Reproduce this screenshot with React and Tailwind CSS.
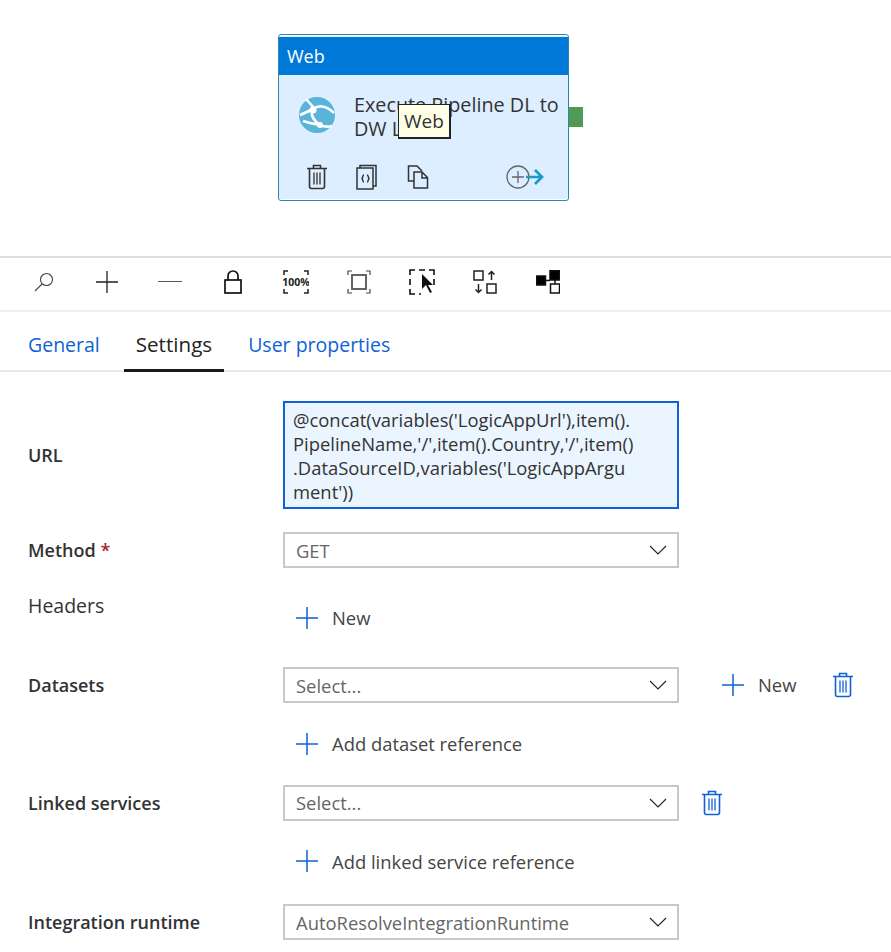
function Trash({ className = 'w-[22px] h-[26px] text-[#333]' }) {
  return (
    <svg viewBox="0 0 22 26" className={className} fill="none" stroke="currentColor" strokeWidth="1.6">
      <path d="M1 4.500h20M7.500 4.500V1.500h7v3M3.500 4.500v18a2 2 0 0 0 2 2h11a2 2 0 0 0 2-2v-18" />
      <path d="M8 8.500v12M11 8.500v12M14 8.500v12" strokeWidth="1.300" />
    </svg>
  )
}

function Plus({ className = 'w-[24px] h-[24px] text-[#0f62d6]' }) {
  return (
    <svg viewBox="0 0 24 24" className={className} fill="none" stroke="currentColor" strokeWidth="1.500">
      <path d="M12 1v22M1 12h22" />
    </svg>
  )
}

function Chevron() {
  return (
    <svg viewBox="0 0 18 10" className="w-[18px] h-[10px] text-[#222]" fill="none" stroke="currentColor" strokeWidth="1.100">
      <path d="M1 1l8 8 8-8" />
    </svg>
  )
}

function Select({ value }) {
  return (
    <div className="w-[396px] h-[36px] border-2 border-[#c8c8c8] bg-white flex items-center justify-between pl-[11px] pr-[10px]">
      <span className="text-[18.400px] text-[#666] pt-[1px]">{value}</span>
      <Chevron />
    </div>
  )
}

function AddButton({ label }) {
  return (
    <div className="flex items-center gap-[13px] pl-[12px]">
      <Plus />
      <span className="text-[18.400px] text-[#444]">{label}</span>
    </div>
  )
}

function Row({ label, className = '', children }) {
  return (
    <div className={`flex items-center ${className}`}>
      <div className="w-[283px] pl-[28px] pt-[1px] text-[18px] font-semibold text-[#333]">{label}</div>
      {children}
    </div>
  )
}

function WebNode() {
  return (
    <div className="relative w-[291px] h-[167px] ml-[278px] border border-[#2f87a8] rounded-[3px] bg-white py-[1px]">
      <div className="h-full flex flex-col bg-[#dceeff]">
        <div className="h-[38px] mt-[1px] bg-[#0078d7] text-white text-[18px] pl-[8px] flex items-center">Web</div>
        <div className="flex pt-[16px] pl-[19px]">
          <svg viewBox="0 0 38 38" className="w-[38px] h-[38px] mt-[5px] shrink-0">
            <circle cx="19" cy="19" r="18" fill="#59b4d9" />
            <path d="M8 3l9 10M2 19c5-2 9-4 13-6M15 13c5-4 13-4 21 4M14 15c-1 4 1 9 8 14M5 25c6 2 12 3 17 4M22 29c4 2 8 2 12 1" fill="none" stroke="#fff" strokeWidth="2.600" />
            <circle cx="15" cy="14" r="3.600" fill="#fff" />
            <circle cx="22" cy="29" r="3" fill="#fff" />
          </svg>
          <div className="ml-[18px] pt-[2px] text-[19.800px] leading-[24px] text-[#333] whitespace-nowrap">
            <div>Execute Pipeline DL to</div>
            <div>DW Load</div>
          </div>
        </div>
        <div className="flex items-center pl-[27px] mt-[23px]">
          <Trash />
          <svg viewBox="0 0 22 26" className="w-[22px] h-[26px] ml-[28px] text-[#333]" fill="none" stroke="currentColor" strokeWidth="1.500">
            <rect x="1" y="4" width="16" height="21" />
            <path d="M4 4V1.500h16V22h-3" />
            <path d="M8 11c-1.500 0-1 2.500-2 3.500 1 1 .5 3.500 2 3.500M11 11c1.500 0 1 2.500 2 3.500-1 1-.5 3.500-2 3.500" strokeWidth="1.400" />
          </svg>
          <svg viewBox="0 0 22 24" className="w-[22px] h-[24px] ml-[29px] text-[#333]" fill="none" stroke="currentColor" strokeWidth="1.500">
            <path d="M8 16H1.500V1H10l5 5" />
            <path d="M7 7h8l5.500 5.500V23H7zM15 7v6h5.500" fill="#dceeff" />
          </svg>
          <svg viewBox="0 0 38 24" className="w-[38px] h-[24px] ml-[77px]" fill="none">
            <circle cx="12" cy="12" r="11" stroke="#666" strokeWidth="1.300" />
            <path d="M12 6v12M6 12h12" stroke="#666" strokeWidth="1.300" />
            <path d="M20 12h16M29 5l7 7-7 7" stroke="#1a9cc4" strokeWidth="2.700" />
          </svg>
        </div>
      </div>
      <div className="absolute left-[290px] top-[72px] w-[14px] h-[20px] bg-[#4f9a55]" />
      <div className="absolute left-[119px] top-[69px] w-[53px] h-[35px] border-2 border-[#222] border-t-[1px] border-l-[1px] bg-[#ffffe8] text-[19px] text-[#333] flex items-center justify-center">Web</div>
    </div>
  )
}

function Toolbar() {
  const cls = 'w-[63px] flex justify-center'
  return (
    <div className="h-[56px] border-y-2 border-t-[#dedede] border-b-[#eeeeee] flex items-center pl-[12px] pb-[4px]">
      <div className={cls}>
        <svg viewBox="0 0 20 20" className="w-[20px] h-[20px]" fill="none" stroke="#444" strokeWidth="1.100">
          <circle cx="12.500" cy="7.500" r="6" />
          <path d="M8 12l-7 7" />
        </svg>
      </div>
      <div className={cls}>
        <svg viewBox="0 0 22 22" className="w-[22px] h-[22px]" fill="none" stroke="#222" strokeWidth="1.300"><path d="M11 0v22M0 11h22" /></svg>
      </div>
      <div className={cls}>
        <svg viewBox="0 0 24 4" className="w-[24px] h-[4px]" fill="none" stroke="#555" strokeWidth="1"><path d="M0 1.500h24" /></svg>
      </div>
      <div className={cls}>
        <svg viewBox="0 0 18 24" className="w-[18px] h-[24px]" fill="none" stroke="#111" strokeWidth="1.700">
          <rect x="1" y="10" width="16" height="13" />
          <path d="M4 10V6a5 5 0 0 1 10 0v4" />
        </svg>
      </div>
      <div className={cls}>
        <svg viewBox="0 0 26 24" className="w-[26px] h-[24px]" fill="none" stroke="#222" strokeWidth="1.500">
          <path d="M5 1H1v4M21 1h4v4M5 23H1v-4M21 23h4v-4" />
          <text x="13" y="16" textAnchor="middle" fontSize="10.500" fontWeight="700" fill="#222" stroke="none" fontFamily="'Open Sans', sans-serif">100%</text>
        </svg>
      </div>
      <div className={cls}>
        <svg viewBox="0 0 24 24" className="w-[24px] h-[24px]" fill="none" stroke="#444" strokeWidth="1.200">
          <path d="M5 1H1v4M19 1h4v4M5 23H1v-4M19 23h4v-4" />
          <rect x="5" y="5" width="14" height="14" strokeWidth="1.800" stroke="#555" />
        </svg>
      </div>
      <div className={cls}>
        <svg viewBox="0 0 26 26" className="w-[26px] h-[26px]" fill="none" stroke="#111" strokeWidth="1.600">
          <path d="M6 1H1v5M20 1h5v5M6 25H1v-5M25 10v6M1 10v6M10 1h6M10 25h2" />
          <path d="M13 5v15l4-4 4 8 2-1-4-7h5z" fill="#111" stroke="none" />
        </svg>
      </div>
      <div className={cls}>
        <svg viewBox="0 0 24 24" className="w-[24px] h-[24px]" fill="none" stroke="#222" strokeWidth="1.500">
          <rect x="1" y="1" width="9" height="9" />
          <rect x="14" y="14" width="9" height="9" />
          <path d="M18.500 10V2M15.500 4.500l3-3 3 3M5.500 14v8M2.500 19.500l3 3 3-3" />
        </svg>
      </div>
      <div className={cls}>
        <svg viewBox="0 0 24 24" className="w-[24px] h-[24px]" stroke="#111" strokeWidth="1.500">
          <rect x="0.500" y="6" width="9" height="9" fill="#000" />
          <rect x="14" y="0.500" width="9.500" height="9.500" fill="#000" />
          <rect x="14.500" y="14" width="9" height="9" fill="#fff" />
          <path d="M9 10.500h5M19 10v4" />
        </svg>
      </div>
    </div>
  )
}

function Tabs() {
  return (
    <div className="h-[60px] border-b-2 border-[#e8e8e8] flex items-stretch gap-3 pl-4 text-[19.500px]">
      <div className="px-3 pt-[18px] text-[#0f62d6]">General</div>
      <div className="px-3 pt-[17px] text-[20.600px] text-[#222] relative font-medium">
        Settings
        <div className="absolute left-0 right-0 bottom-[-2px] h-[3px] bg-[#1a1a1a]" />
      </div>
      <div className="px-3 pt-[18px] text-[#0f62d6]">User properties</div>
    </div>
  )
}

export default function App() {
  return (
    <div className="w-[891px] h-[952px] bg-white overflow-hidden" style={{ fontFamily: "'Open Sans', 'Noto Sans', sans-serif" }}>
      <div className="h-[256px] pt-[34px]">
        <WebNode />
      </div>
      <Toolbar />
      <Tabs />
      <div className="pt-[29px]">
        <Row label="URL">
          <div className="w-[396px] h-[108px] border-2 border-[#0f62d6] bg-[#eaf5ff] pl-[8px] pt-[5px] text-[18.400px] leading-[24px] text-[#333] whitespace-nowrap">
            <div>@concat(variables('LogicAppUrl'),item().</div>
            <div>PipelineName,'/',item().Country,'/',item()</div>
            <div>.DataSourceID,variables('LogicAppArgu</div>
            <div>ment'))</div>
          </div>
        </Row>
        <Row label={<>Method <span className="text-[#a4262c]">*</span></>} className="mt-[23px]">
          <Select value="GET" />
        </Row>
        <div className="flex mt-[21px] h-[78px]">
          <div className="w-[283px] pl-[28px] text-[19.500px] text-[#333] mt-[2px]">Headers</div>
          <div className="pt-[15px]"><AddButton label="New" /></div>
        </div>
        <Row label="Datasets">
          <Select value="Select..." />
          <div className="flex items-center ml-[30px]">
            <AddButton label="New" />
            <Trash className="w-[22px] h-[26px] text-[#0f62d6] ml-[36px]" />
          </div>
        </Row>
        <div className="pl-[283px] mt-[27px]"><AddButton label="Add dataset reference" /></div>
        <Row label="Linked services" className="mt-[27px]">
          <Select value="Select..." />
          <Trash className="w-[22px] h-[26px] text-[#0f62d6] ml-[22px]" />
        </Row>
        <div className="pl-[283px] mt-[27px]"><AddButton label="Add linked service reference" /></div>
        <Row label="Integration runtime" className="mt-[29px]">
          <Select value="AutoResolveIntegrationRuntime" />
        </Row>
      </div>
    </div>
  )
}
